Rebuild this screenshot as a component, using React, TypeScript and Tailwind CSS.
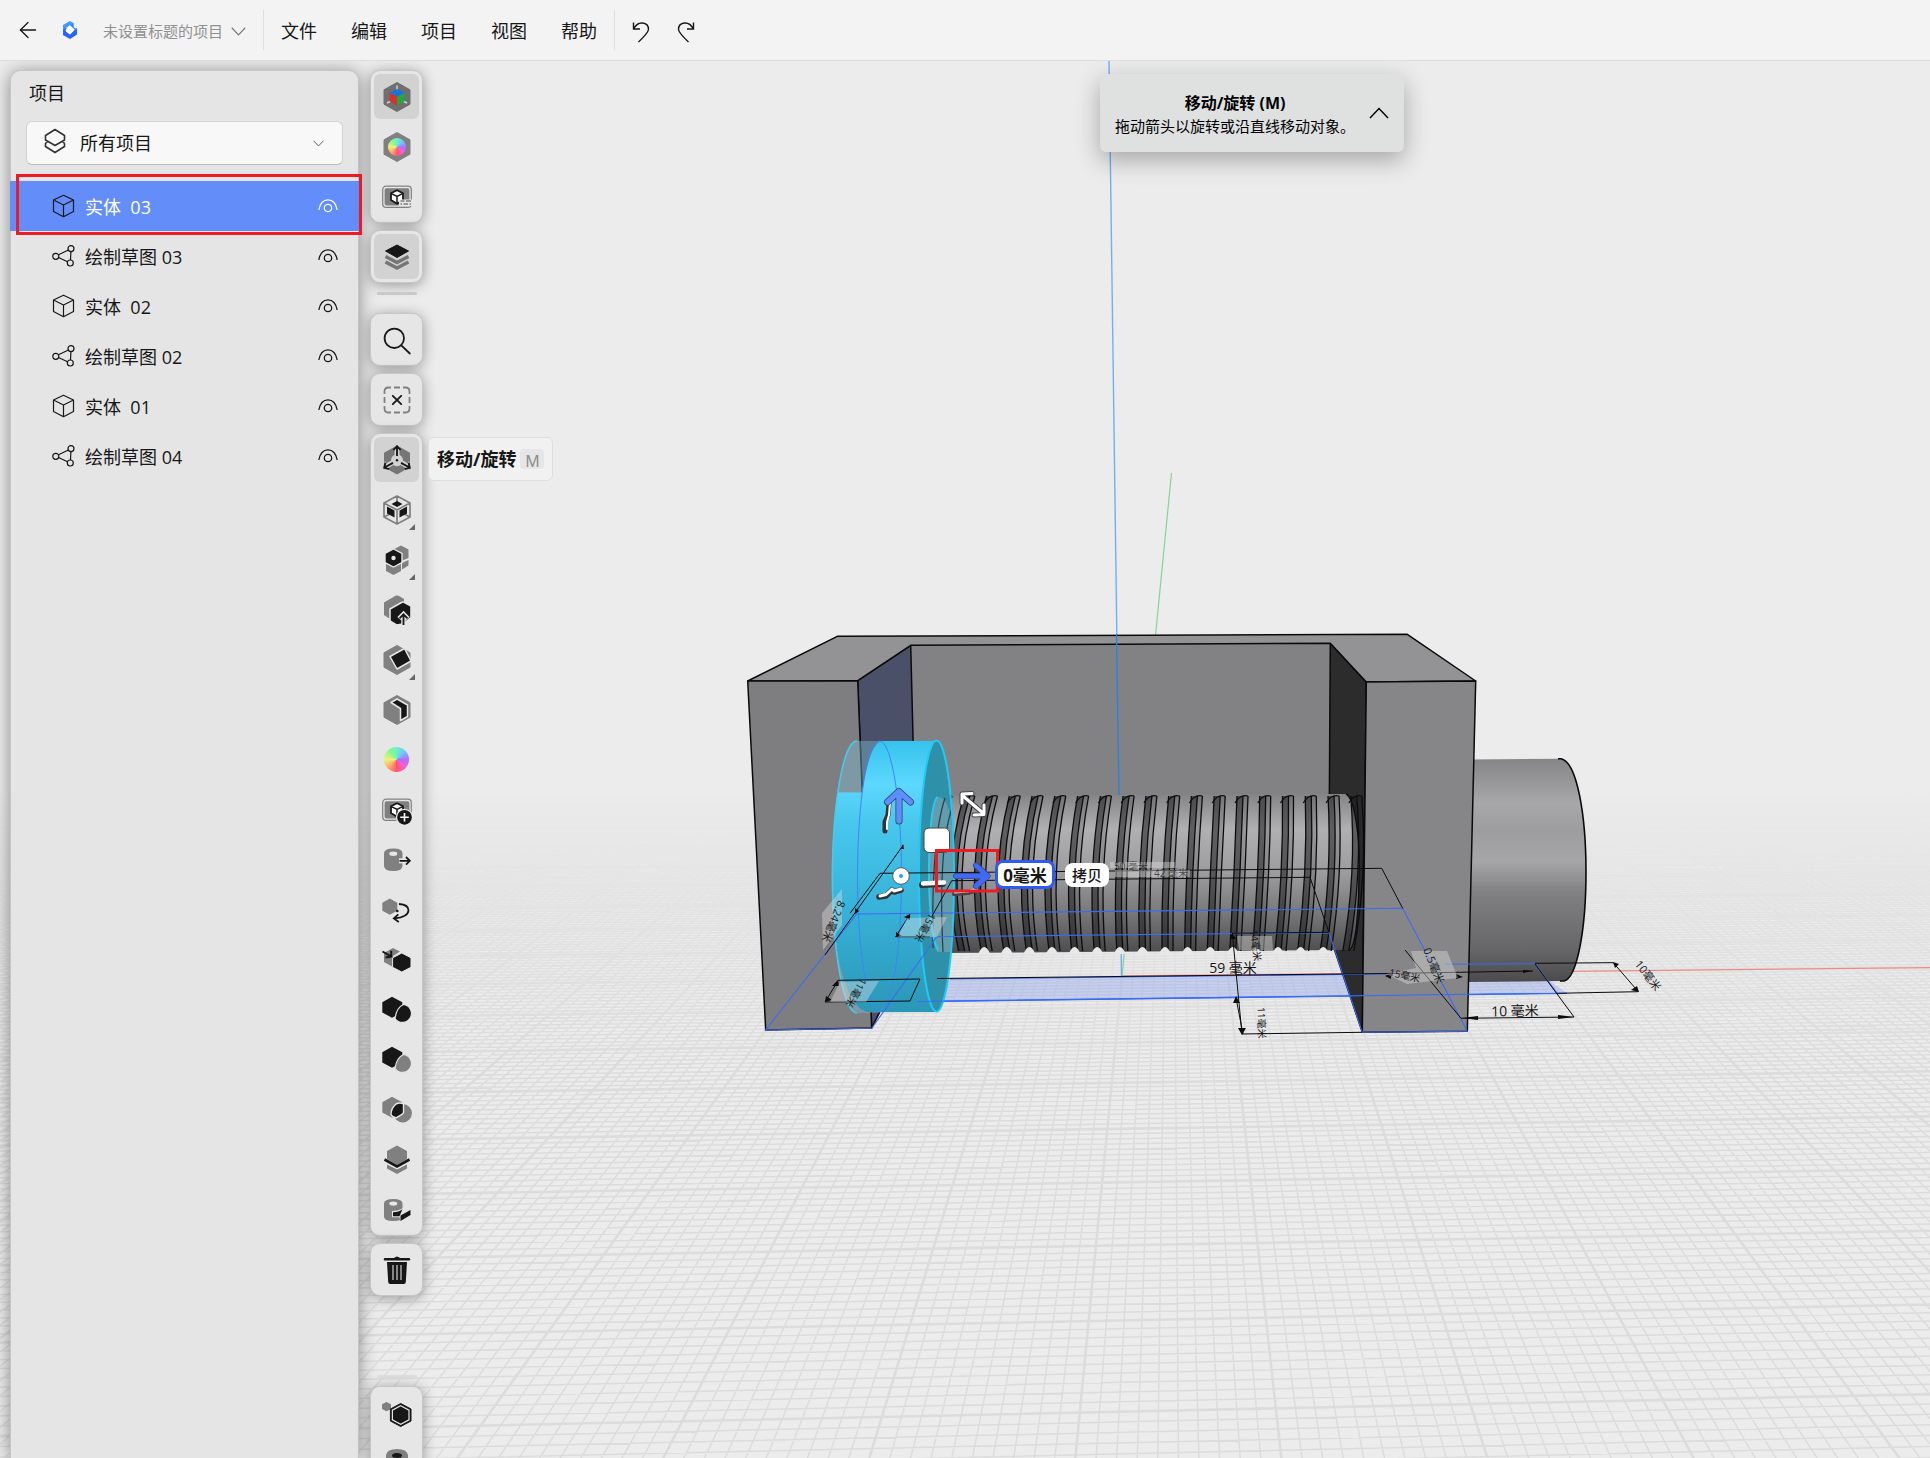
import { useState, type ReactNode } from 'react';
import { ArrowLeft } from 'lucide-react';

const menus = ['文件', '编辑', '项目', '视图', '帮助'];

const items = [
  { id: 1, kind: 'body', name: '实体  03' },
  { id: 2, kind: 'sketch', name: '绘制草图 03' },
  { id: 3, kind: 'body', name: '实体  02' },
  { id: 4, kind: 'sketch', name: '绘制草图 02' },
  { id: 5, kind: 'body', name: '实体  01' },
  { id: 6, kind: 'sketch', name: '绘制草图 04' },
];

const HEX = 'M15 0.5 28 7.8V22.2L15 29.5 2 22.2V7.8Z';
const SMALL_HEX = 'M10 1.7 20.3 7.2V17.5L10 22.8 0.3 17.5V7.2Z';
const DARK = '#171717';
const GRAY = '#808080';
const PANEL = '#e6e6e6';

function Icon({ children }: { children: ReactNode }) {
  return (
    <svg viewBox="0 0 30 30" className="h-[30px] w-[30px]" fill="none" aria-hidden="true">
      {children}
    </svg>
  );
}

function Chevron({ className, up }: { className: string; up?: boolean }) {
  return (
    <svg viewBox="0 0 20 12" className={className} fill="none" stroke="currentColor" strokeWidth="1.5" aria-hidden="true">
      <path d={up ? 'M1 11 10 1.5 19 11' : 'M1 1 10 10.5 19 1'} />
    </svg>
  );
}

function Wheel({ className }: { className: string }) {
  return (
    <span
      className={`block rounded-full bg-[conic-gradient(#66f5c8,#74c4ff_45deg,#b56bff_90deg,#f35fd8_130deg,#ff5573_180deg,#ffab63_225deg,#ecf27a_270deg,#8af78a_320deg,#66f5c8)] ${className}`}
    />
  );
}

function SceneCube() {
  return (
    <>
      <rect x="0.7" y="4.2" width="28.6" height="21.2" rx="3.5" stroke={GRAY} strokeWidth="1.2" />
      <rect x="2.6" y="6.2" width="24.8" height="17.2" rx="1.8" fill={GRAY} />
      <path d="M15 8.2 21 11.3V18L15 21.8 9 18V11.3Z" fill="#fff" stroke={DARK} strokeWidth="1.8" strokeLinejoin="round" />
      <path d="M9 11.3 15 14.5 21 11.3M15 14.5V21.5" stroke={DARK} strokeWidth="1.5" />
    </>
  );
}

const icons: Record<string, ReactNode> = {
  axes: (
    <Icon>
      <path d={HEX} fill="#6f6f6f" stroke="#6f6f6f" strokeLinejoin="round" />
      <path d="M15 3.5V8M5 21 9 19M25 21 21 19" stroke="#d4d4d4" strokeWidth="1.5" />
      <path d="M15 7 22.5 10.8 15 15 7.5 10.8Z" fill="#1a72e0" />
      <path d="M7.5 10.8 15 15V23.5L7.5 19.3Z" fill="#d9302c" />
      <path d="M22.5 10.8 15 15V23.5L22.5 19.3Z" fill="#23a83c" />
    </Icon>
  ),
  material: (
    <span className="relative grid place-items-center">
      <Icon>
        <path d={HEX} fill={GRAY} stroke={GRAY} strokeLinejoin="round" />
      </Icon>
      <Wheel className="absolute h-[18px] w-[18px]" />
    </span>
  ),
  scene: (
    <Icon>
      <SceneCube />
      <path d="M17 17.5H30V24H17Z" fill={PANEL} />
      <path d="M18.5 19H22.5M24 19H29M18.5 22H20M21.5 22H26M27.5 22H29" stroke={GRAY} strokeWidth="1.7" />
    </Icon>
  ),
  layers: (
    <Icon>
      <path d="M3.5 14.5 15 20.5 26.5 14.5M3.5 20 15 26 26.5 20" stroke="#767676" strokeWidth="3.6" strokeLinejoin="round" />
      <path d="M15 1 28.5 8.8 15 17 1.5 8.8Z" fill="#d2d2d2" />
      <path d="M15 3 26.5 9 15 15.5 3.5 9Z" fill={DARK} stroke={DARK} strokeLinejoin="round" />
    </Icon>
  ),
  search: (
    <Icon>
      <circle cx="12.3" cy="13.3" r="9.7" stroke={DARK} strokeWidth="1.8" />
      <path d="M19.3 20.3 27.8 28.5" stroke={DARK} strokeWidth="1.8" strokeLinecap="round" />
    </Icon>
  ),
  deselect: (
    <Icon>
      <path
        d="M2.5 9V6.5Q2.5 2.5 6.5 2.5H9M12 2.5H18M21 2.5H23.5Q27.5 2.5 27.5 6.5V9M27.5 12V18M27.5 21V23.5Q27.5 27.5 23.5 27.5H21M18 27.5H12M9 27.5H6.5Q2.5 27.5 2.5 23.5V21M2.5 18V12"
        stroke={GRAY}
        strokeWidth="1.8"
      />
      <path d="M10.8 10.8 19.2 19.2M19.2 10.8 10.8 19.2" stroke={DARK} strokeWidth="1.8" strokeLinecap="round" />
    </Icon>
  ),
  move: (
    <Icon>
      <path d={HEX} fill="#767676" />
      <circle cx="15" cy="15.3" r="6" fill="#d2d2d2" />
      <path d="M15 0V10M10 18 1 23M20 18 29 23" stroke="#d2d2d2" strokeWidth="5" />
      <path d="M10.5 4.5 15 0 19.5 4.5ZM3 16 0 24 8 26ZM27 16 30 24 22 26Z" fill="#d2d2d2" />
      <path
        d="M15 11V1.5M11.3 5 15 1.2 18.7 5M11 17.8 2.5 22.5M3.4 17.7 2.2 22.9 7.3 24.2M19 17.8 27.5 22.5M26.6 17.7 27.8 22.9 22.7 24.2"
        stroke={DARK}
        strokeWidth="1.9"
      />
      <circle cx="15" cy="15.2" r="1.2" fill={DARK} />
    </Icon>
  ),
  scale: (
    <Icon>
      <path d="M15 1 28 8V22L15 29 2 22V8Z M2 8 15 15 28 8M15 15V29M15 1V8M2 22 8 19M28 22 22 19" stroke={GRAY} strokeWidth="1.7" strokeLinejoin="round" />
      <path d="M15 6 20.5 9 15 12 9.5 9Z M5 11.5 12.5 15.5V22.5L5 18.5Z M25 11.5 17.5 15.5V22.5L25 18.5Z" fill={DARK} />
    </Icon>
  ),
  array: (
    <Icon>
      <path d="M19 0.5 26.5 4.5V13L19 16 11.5 10V4.5Z M26.5 15V20.5L20 24.5V18Z M4 18.5 11.5 22 19 18.5V26L11.5 30 4 26Z" fill={GRAY} />
      <path d="M11.5 4 20 8.4V17.6L11.5 22 3 17.6V8.4Z" fill={DARK} stroke={PANEL} strokeWidth="1.4" />
      <circle cx="11.5" cy="13" r="2.2" fill="#e6e6e6" />
    </Icon>
  ),
  extrude: (
    <Icon>
      <path d="M13.5 0.8 Q15 0 16.5 0.8L22 4V14L8 24 2 20V7.5Z" fill={GRAY} />
      <path d="M19.5 7.5Q21 6.6 22.5 7.5L29 11V22.5L21 29 14.5 30 8 26V14Z" fill={DARK} stroke={PANEL} strokeWidth="1.6" />
      <path d="M21.5 30V19.5M17 23.5 21.5 19 26 23.5" stroke={PANEL} strokeWidth="4.5" />
      <path d="M21.5 30V19.5M17.5 23.3 21.5 19.3 25.5 23.3" stroke={DARK} strokeWidth="1.8" />
    </Icon>
  ),
  draft: (
    <Icon>
      <path d={HEX} fill={GRAY} stroke={GRAY} strokeLinejoin="round" />
      <path d="M8 11.5 22.5 3.5 29 16 15 24Z" fill={DARK} stroke={PANEL} strokeWidth="1.5" strokeLinejoin="round" />
    </Icon>
  ),
  shell: (
    <Icon>
      <path d={HEX} fill={GRAY} stroke={GRAY} strokeLinejoin="round" />
      <path d="M9 7.5 15 4 25.5 10V21.5L18.5 25.5V13.5Z" fill={DARK} stroke={PANEL} strokeWidth="1.5" strokeLinejoin="round" />
    </Icon>
  ),
  color: <Wheel className="h-[25px] w-[25px]" />,
  addScene: (
    <Icon>
      <SceneCube />
      <circle cx="22.5" cy="22.3" r="8" fill={DARK} stroke={PANEL} strokeWidth="1.3" />
      <path d="M22.5 18V26.6M18.2 22.3H26.8" stroke="#fff" strokeWidth="1.6" />
    </Icon>
  ),
  pushFace: (
    <Icon>
      <path d="M2 8.5Q2 3.5 11.3 3.5 20.5 3.5 20.5 8.5V20.5Q20.5 26 11.3 26 2 26 2 20.5Z" fill={GRAY} />
      <ellipse cx="11.3" cy="8.8" rx="4" ry="2.2" fill={PANEL} />
      <path d="M17 15.8H28" stroke={PANEL} strokeWidth="5" />
      <path d="M17.5 15.8H27.5M24 12 27.8 15.8 24 19.6" stroke={DARK} strokeWidth="1.8" />
    </Icon>
  ),
  revolve: (
    <Icon>
      <path d="M7.8 3.5 15.3 7.7V15.8L7.8 19.8 0.3 15.8V7.7Z" fill={GRAY} />
      <path d="M17 9Q26.5 9.5 26.5 15.5 26 22 12.5 23.5M16.3 19.3 11.8 23.5 16.8 27" stroke={DARK} strokeWidth="1.8" />
      <circle cx="15.3" cy="16" r="1.3" fill={DARK} />
    </Icon>
  ),
  project: (
    <Icon>
      <path d="M11 3 18 6.5 11 11V22L2 17V8Z" fill={GRAY} />
      <path d="M19.8 8 29 12.8V22.3L19.8 27 10.6 22.3V12.8Z" fill={DARK} stroke={PANEL} />
      <path d="M0.5 6.5 9 11.3M9.2 5.8V11.6L3.5 12.6" stroke={DARK} strokeWidth="2" />
    </Icon>
  ),
  union: (
    <Icon>
      <path d={SMALL_HEX} fill={DARK} />
      <path d="M21.5 9.5A9 9 0 1 1 13 23.5Q14.5 12.5 21.5 9.5Z" fill={DARK} stroke={PANEL} strokeWidth="1.2" />
    </Icon>
  ),
  subtract: (
    <Icon>
      <path d={SMALL_HEX} fill={DARK} />
      <path d="M21.5 9.5A9 9 0 1 1 13 23.5Q14.5 12.5 21.5 9.5Z" fill={GRAY} stroke={PANEL} strokeWidth="1.2" />
    </Icon>
  ),
  intersect: (
    <Icon>
      <path d={SMALL_HEX} fill={GRAY} />
      <circle cx="20.7" cy="18.2" r="9.2" fill={GRAY} />
      <path d="M14 9Q18 7 21.5 9V17.5Q21 19.5 14 22.8 10 22 9 19.5 9 13.5 14 9Z" fill={DARK} stroke={PANEL} strokeWidth="1.4" />
    </Icon>
  ),
  split: (
    <Icon>
      <path d="M15 0.5 25 6V14L15 20 5 14V6Z M5 19.5 15 24.5 25 19.5V23.5L15 29 5 23.5Z" fill={GRAY} />
      <path d="M2.5 14.5 15 21.5 27.5 14.5" stroke={DARK} strokeWidth="2.6" />
    </Icon>
  ),
  wrap: (
    <Icon>
      <path d="M2 8.5Q2 4 11.3 4 20.5 4 20.5 8.5V21.5Q20.5 26 11.3 26 2 26 2 21.5Z" fill={GRAY} />
      <ellipse cx="11.3" cy="8.6" rx="4" ry="2.2" fill={PANEL} />
      <path d="M10 16Q17 16 21 13V17L29.5 13V20L18.5 27 17.5 22.3H10Z" fill={PANEL} />
      <path d="M11 17.2Q17 17 20.5 14.2L17.5 21.3H11Z M18.5 20.5 28.5 15V20L18.5 26Z" fill={DARK} />
    </Icon>
  ),
  trash: (
    <Icon>
      <path d="M3 4.3H27" stroke={DARK} strokeWidth="2.4" strokeLinecap="round" />
      <path d="M11 4Q15 -1 19 4Z" fill={DARK} />
      <path d="M5 7H25L23.8 27Q23.7 29 21.8 29H8.2Q6.3 29 6.2 27Z" fill={DARK} />
      <path d="M11 10V25M15 10V25M19 10V25" stroke="#cfcfcf" strokeWidth="1.2" />
    </Icon>
  ),
  body: (
    <Icon>
      <path d="M4.5 4 9 6.3V11L4.5 13.3 0 11V6.3Z" fill={GRAY} />
      <path d="M18.7 5.5 29 11V23L18.7 28.5 8.4 23V11Z" fill={DARK} stroke={DARK} strokeLinejoin="round" />
      <path d="M18.7 7.8 27 12.2V21.8L18.7 26.2 10.4 21.8V12.2Z" stroke={PANEL} strokeWidth="1.2" />
    </Icon>
  ),
  face: (
    <Icon>
      <path d="M4 7Q5 1 15 1T26 7V25H4Z" fill={GRAY} />
      <ellipse cx="15" cy="7.5" rx="5" ry="2.5" fill={DARK} />
    </Icon>
  ),
};

type Tool = { icon: string; label: string; active?: boolean; more?: boolean; hint?: boolean };

const viewTools: Tool[] = [
  { icon: 'axes', label: '建模', active: true },
  { icon: 'material', label: '材质' },
  { icon: 'scene', label: '场景' },
];

const modelTools: Tool[] = [
  { icon: 'move', label: '移动/旋转', active: true, hint: true },
  { icon: 'scale', label: '缩放', more: true },
  { icon: 'array', label: '阵列', more: true },
  { icon: 'extrude', label: '拉伸' },
  { icon: 'draft', label: '倒角', more: true },
  { icon: 'shell', label: '抽壳' },
  { icon: 'color', label: '颜色' },
  { icon: 'addScene', label: '添加场景' },
  { icon: 'pushFace', label: '偏移面' },
  { icon: 'revolve', label: '旋转体' },
  { icon: 'project', label: '投影' },
  { icon: 'union', label: '并集' },
  { icon: 'subtract', label: '差集' },
  { icon: 'intersect', label: '交集' },
  { icon: 'split', label: '分割' },
  { icon: 'wrap', label: '包裹' },
];

function ToolGroup({ tools }: { tools: Tool[] }) {
  return (
    <div className="flex flex-col gap-[5px] rounded-[10px] border border-[#c6c6c6] bg-[#e6e6e6] p-[3px] shadow-[0_2px_14px_rgba(0,0,0,0.36)]">
      {tools.map((tool) => (
        <div key={tool.icon} className="relative">
          <button
            type="button"
            aria-label={tool.label}
            className={`grid h-[45px] w-[45px] place-items-center rounded-md ${tool.active ? 'bg-[#d2d2d2]' : 'hover:bg-[#dcdcdc]'}`}
          >
            {icons[tool.icon]}
          </button>
          {tool.more && (
            <svg viewBox="0 0 6 6" className="pointer-events-none absolute right-1 bottom-0.5 h-1.5 w-1.5" aria-hidden="true">
              <path d="M6 0V6H0Z" fill="#666" />
            </svg>
          )}
          {tool.hint && (
            <div
              role="tooltip"
              className="absolute top-0 left-[54px] z-10 flex h-[44px] items-center gap-1 rounded-md border border-[#dedede] bg-[#f1f1f1] px-2 text-[18px] font-bold whitespace-nowrap text-[#171717]"
            >
              {tool.label}
              <kbd className="grid h-5 w-6 place-items-center rounded bg-[#e6e6e6] font-sans text-[16px] font-normal text-[#8d8d8d]">
                M
              </kbd>
            </div>
          )}
        </div>
      ))}
    </div>
  );
}

function Toolbar() {
  return (
    <nav aria-label="工具" className="relative flex w-[53px] shrink-0 flex-col">
      <div className="flex flex-col gap-[7px]">
        <ToolGroup tools={viewTools} />
        <ToolGroup tools={[{ icon: 'layers', label: '图层', active: true }]} />
      </div>
      <div className="mx-auto mt-[9px] mb-[18px] h-[3px] w-10 shrink-0 rounded bg-[#c9c9c9]" />
      <div className="flex flex-col gap-[7px]">
        <ToolGroup tools={[{ icon: 'search', label: '搜索' }]} />
        <ToolGroup tools={[{ icon: 'deselect', label: '取消选择' }]} />
        <ToolGroup tools={modelTools} />
        <ToolGroup tools={[{ icon: 'trash', label: '删除' }]} />
      </div>
      <div className="mx-auto mt-[79px] mb-2 h-[3px] w-10 shrink-0 rounded bg-[#dedede]" />
      <ToolGroup
        tools={[
          { icon: 'body', label: '选择实体' },
          { icon: 'face', label: '选择面' },
        ]}
      />
    </nav>
  );
}

function Header() {
  return (
    <header className="flex h-[61px] shrink-0 items-center border-b border-[#dcdcdc] bg-[#f3f3f3] text-[#171717]">
      <button type="button" aria-label="返回" className="ml-[15px]">
        <ArrowLeft size={26} strokeWidth={1.2} />
      </button>
      <svg viewBox="0 0 16 20" className="ml-[21px] h-5 w-4" aria-hidden="true">
        <path d="M1 5 8 1 11.5 3V7L8 5.2 4.5 7.5 2.5 13 1 12Z" fill="#3f9bff" />
        <path d="M4.5 7.5 1 10V12L4 13.5Z" fill="#1b6dff" />
        <path d="M12 9.5 15 8V14.5L8 19 1 15V12.3L4.5 12 8 14.6Z" fill="#2463ff" />
        <path d="M11.5 3V7L14.8 9.5 12.5 10.5 8 5.2Z" fill="#2d83ff" />
        <path d="M8 5.2 12.8 9.8 8 14.6 3.4 10.4Z" fill="#fff" />
      </svg>
      <button type="button" className="ml-[25px] flex h-10 items-center gap-2 border-r border-[#dedede] pt-0.5 pr-[17px] text-[15px] text-[#909090]">
        未设置标题的项目
        <Chevron className="h-[9px] w-[15px] text-[#777]" />
      </button>
      <div className="flex h-10 items-center gap-[34px] border-r border-[#dedede] px-[17px] pt-0.5 text-[18px]">
        {menus.map((menu) => (
          <button key={menu} type="button">
            {menu}
          </button>
        ))}
      </div>
      <div className="ml-4 flex items-center gap-[25px] pt-1">
        <button type="button" aria-label="撤消">
          <svg viewBox="0 0 20 24" className="h-6 w-5" fill="none" stroke="#171717" strokeWidth="1.4">
            <path d="M2.5 2.5V9H9M2.5 9Q6 2.5 11.5 3 17.5 3.5 17.5 9.5 17 13 7.5 22" />
          </svg>
        </button>
        <button type="button" aria-label="重做">
          <svg viewBox="0 0 20 24" className="h-6 w-5" fill="none" stroke="#171717" strokeWidth="1.4">
            <path d="M17.5 2.5V9H11M17.5 9Q14 2.5 8.5 3 2.5 3.5 2.5 9.5 3 13 12.5 22" />
          </svg>
        </button>
      </div>
    </header>
  );
}

function ItemIcon({ kind }: { kind: string }) {
  return (
    <svg viewBox="0 0 24 24" className="h-6 w-6" fill="none" stroke="currentColor" strokeWidth="1.2" strokeLinejoin="round" aria-hidden="true">
      {kind === 'body' ? (
        <path d="M11.5 1.3 21.5 6V17.5L11.5 22.7 1.5 17.5V6Z M1.5 6 11.5 11 21.5 6M11.5 11V22.7" />
      ) : (
        <>
          <circle cx="3.8" cy="12.3" r="3" />
          <circle cx="19" cy="4.6" r="3" />
          <circle cx="18.3" cy="19" r="3" />
          <path d="M6.5 10.8 16.4 6M6.5 13.5 15.5 17.8M18.9 7.7 18.5 16" />
        </>
      )}
    </svg>
  );
}

function ProjectPanel() {
  const [selected, setSelected] = useState(1);
  return (
    <aside className="relative flex w-[349px] shrink-0 flex-col rounded-t-[10px] border border-b-0 border-[#c6c6c6] bg-[#e5e5e5] text-[18px] text-[#171717] shadow-[0_2px_18px_rgba(0,0,0,0.42)]">
      <h2 className="px-[18px] pt-2 leading-7">项目</h2>
      <div className="relative mx-[15px] mt-3.5">
        <svg viewBox="0 0 24 26" className="pointer-events-none absolute top-[7px] left-[17px] h-[26px] w-6" fill="none" stroke="#333" strokeWidth="1.6" strokeLinejoin="round" aria-hidden="true">
          <path d="M12 1.5 21.5 7.5V12L12 17.5 2.5 12V7.5Z M4.5 13.5 2.5 15.5V18.5L12 24.5 21.5 18.5V15.5L19.5 13.5" />
        </svg>
        <select
          aria-label="筛选项目"
          className="h-11 w-full appearance-none rounded-md border border-[#d2d2d2] border-b-[#bcbcbc] bg-[#f8f8f8] pl-[53px]"
        >
          <option>所有项目</option>
        </select>
        <Chevron className="pointer-events-none absolute top-[19px] right-[19px] h-[7px] w-[11px] text-[#444]" />
      </div>
      <ul className="mt-4 -mr-px -ml-px">
        {items.map((item) => (
          <li
            key={item.id}
            className={`flex h-[50px] items-center pr-[21px] pl-[42px] ${selected === item.id ? 'bg-[#638df9]' : ''}`}
          >
            <button type="button" onClick={() => setSelected(item.id)} className="flex flex-1 items-center gap-[9px] text-left">
              <ItemIcon kind={item.kind} />
              <span className={`pt-0.5 whitespace-pre ${selected === item.id ? 'text-white' : ''}`}>{item.name}</span>
            </button>
            <button type="button" aria-label={`显示或隐藏 ${item.name}`} className={selected === item.id ? 'text-white' : ''}>
              <svg viewBox="0 0 20 16" className="h-4 w-5" fill="none" stroke="currentColor" strokeWidth="1.3">
                <path d="M0.8 12C2 5.5 5.5 1.8 10 1.8S18 5.5 19.2 12" />
                <circle cx="10" cy="10" r="3.7" />
              </svg>
            </button>
          </li>
        ))}
      </ul>
      <div className="pointer-events-none absolute top-[103px] left-[5px] h-[61px] w-[346px] border-[3px] border-[#ed1c24]" />
    </aside>
  );
}

// Ground plane projection: lines along Y meet at (1171.5, 467), lines along X lean on a far point.
function groundLines() {
  let minor = '';
  let major = '';
  for (let k = -160; k <= 120; k++) {
    const slope = -0.097 + k * 0.02079;
    const seg = `M${(1171.5 + slope * 323).toFixed(1)} 790L${(1171.5 + slope * 1003).toFixed(1)} 1470`;
    if (k % 10 === 0) major += seg;
    else minor += seg;
  }
  for (let k = -110; k <= 92; k++) {
    const n = k / 10;
    const y = 977.7 + (510.3 * n) / (17.35 - n);
    const lean = (y - 467) / 43500;
    const seg = `M0 ${(y + lean * 1000).toFixed(1)}L1930 ${(y - lean * 930).toFixed(1)}`;
    if (k % 10 === 0) major += seg;
    else minor += seg;
  }
  return { minor, major };
}

const ground = groundLines();

const threads = Array.from({ length: 19 }, (_, i) => {
  const t = i / 18;
  const bottom = 939 + i * 22.6;
  const top = bottom + 5 + t * 3;
  const bow = -22 + t * 32;
  const mid = (top + bottom) / 2 + bow;
  const down = (dx: number) => `M${(top + dx).toFixed(1)} 796Q${(mid + dx).toFixed(1)} 873 ${(bottom + dx).toFixed(1)} 951`;
  const up = (dx: number) => `L${(bottom + dx).toFixed(1)} 951Q${(mid + dx).toFixed(1)} 873 ${(top + dx).toFixed(1)} 796Z`;
  return {
    groove: down(-3) + up(3),
    flank: down(3) + up(8),
    edges: down(-3) + down(3) + down(8),
    notch: `M${bottom - 6} 954Q${bottom} 940 ${bottom + 6} 954Z`,
    hook: `M${top - 5} 803Q${top} 794 ${top + 8} 796`,
  };
});

const dimensions = [
  { text: '59 毫米', x: 1233, y: 973, turn: 0, size: 14 },
  { text: '10 毫米', x: 1515, y: 1016, turn: -1, size: 14 },
  { text: '11毫米', x: 1258, y: 1023, turn: 88, size: 10 },
  { text: '14毫米', x: 1252, y: 946, turn: 82, size: 10 },
  { text: '10毫米', x: 1645, y: 978, turn: 52, size: 11 },
  { text: '0.5毫米', x: 1430, y: 967, turn: 68, size: 11 },
  { text: '15毫米', x: 1404, y: 979, turn: 12, size: 10 },
  { text: '8.24毫米', x: 830, y: 920, turn: 112, size: 11 },
  { text: '15毫米', x: 922, y: 926, turn: 120, size: 10 },
  { text: '11毫米', x: 853, y: 991, turn: 120, size: 10 },
];

function Scene() {
  return (
    <svg viewBox="0 61 1930 1397" preserveAspectRatio="xMidYMid slice" className="absolute inset-0 h-full w-full" fill="none" role="img" aria-label="模型视图">
      <defs>
        <linearGradient id="fog" x1="0" y1="790" x2="0" y2="1060" gradientUnits="userSpaceOnUse">
          <stop offset="0" stopColor="#fff" stopOpacity="0" />
          <stop offset="0.4" stopColor="#fff" stopOpacity="0.55" />
          <stop offset="1" stopColor="#fff" />
        </linearGradient>
        <mask id="far" maskUnits="userSpaceOnUse" x="0" y="780" width="1930" height="700">
          <rect x="0" y="780" width="1930" height="700" fill="url(#fog)" />
        </mask>
        <linearGradient id="shaft" x1="0" y1="794" x2="0" y2="953" gradientUnits="userSpaceOnUse">
          <stop offset="0" stopColor="#848486" />
          <stop offset="0.22" stopColor="#b0b0b3" />
          <stop offset="0.5" stopColor="#9c9c9f" />
          <stop offset="0.75" stopColor="#78787a" />
          <stop offset="1" stopColor="#4c4c4e" />
        </linearGradient>
        <linearGradient id="knob" x1="0" y1="759" x2="0" y2="982" gradientUnits="userSpaceOnUse">
          <stop offset="0" stopColor="#868688" />
          <stop offset="0.2" stopColor="#a8a8ab" />
          <stop offset="0.32" stopColor="#9d9d9f" />
          <stop offset="0.46" stopColor="#a6a6a8" />
          <stop offset="0.6" stopColor="#808082" />
          <stop offset="0.85" stopColor="#676769" />
          <stop offset="1" stopColor="#4b4b4d" />
        </linearGradient>
        <linearGradient id="disc" x1="0" y1="741" x2="0" y2="1012" gradientUnits="userSpaceOnUse">
          <stop offset="0" stopColor="#36c3ed" />
          <stop offset="0.16" stopColor="#5dd8fe" />
          <stop offset="0.3" stopColor="#48c8ed" />
          <stop offset="0.6" stopColor="#38b3d9" />
          <stop offset="1" stopColor="#2b97b7" />
        </linearGradient>
      </defs>

      <g mask="url(#far)" stroke="#dcdcdc">
        <path d={ground.minor} strokeWidth="1.5" />
        <path d={ground.major} strokeWidth="2.6" />
      </g>

      {/* axes */}
      <path d="M1122 976 1930 967.6" stroke="#f08a8a" strokeWidth="1.3" />
      <path d="M1171.5 473 1122 976" stroke="#85d494" strokeWidth="1.2" />
      <path d="M1109 61 1121.5 976" stroke="#6fb0f5" strokeWidth="1.4" />

      {/* sketch region on the ground */}
      <path d="M917 979 1535 971 1567 993 917 1002Z" fill="#4f74f5" fillOpacity="0.24" />
      <path d="M917 1001.5 1567 993.3" stroke="#3468f5" strokeWidth="1.3" />

      {/* knob on the right */}
      <path d="M1470 759.5 1561 758.7C1577 762 1586 815 1586 872 1586 930 1577 978 1564 981L1466 982Z" fill="url(#knob)" />
      <path d="M1558 758.7 1561 758.7C1577 762 1586 815 1586 872 1586 930 1577 978 1564 981H1560" stroke="#0a0a0a" strokeWidth="1.6" />

      {/* bracket */}
      <g strokeLinejoin="round">
        <path d="M910.7 645.3 1330.3 643.3 1329 932 917 936Z" fill="#828284" />
        <path d="M1330.3 643.3 1366.3 682 1362.3 1032.3 1328.5 932Z" fill="#2c2c2c" stroke="#0a0a0a" strokeWidth="1.5" />
        <path d="M857.7 680.7 910.7 645.3 918 936 871.7 1028Z" fill="#4b5069" stroke="#0a0a0a" strokeWidth="1.5" />
        <path d="M747.7 681 837.3 636.3 1407.3 634.3 1475.7 681 1366.3 682 1330.3 643.3 910.7 645.3 857.7 680.7Z" fill="#939395" stroke="#0a0a0a" strokeWidth="1.5" />
        <path d="M747.7 681 857.7 680.7 871.7 1028 765.7 1030Z" fill="#7e7e80" stroke="#0a0a0a" strokeWidth="1.5" />
        <path d="M1366.3 682 1475.7 681 1467.3 1031.3 1362.3 1032.3Z" fill="#868688" stroke="#0a0a0a" strokeWidth="1.5" />
      </g>
      <path d="M1116.5 635 1119 796" stroke="#2f7fe0" strokeWidth="1.4" />

      {/* threaded shaft */}
      <path d="M936 796 1346 794C1355 798 1360 840 1359 868 1359 910 1356 945 1352 950L940 953C925 930 925 820 936 796Z" fill="url(#shaft)" />
      <g>
        {threads.map((thread, i) => (
          <g key={i}>
            <path d={thread.groove} fill="#1b1b1d" fillOpacity="0.55" />
            <path d={thread.flank} fill="#1b1b1d" fillOpacity="0.16" />
            <path d={thread.edges} stroke="#0c0c0c" strokeWidth="1.3" />
            <path d={thread.hook} stroke="#0c0c0c" strokeWidth="1.2" />
            {i > 1 && i < 18 && <path d={thread.notch} fill="#e8e8e8" />}
          </g>
        ))}
        <path d="M1346 794C1355 798 1360 840 1359 868 1359 910 1356 945 1350 950" stroke="#0c0c0c" strokeWidth="1.4" />
      </g>

      {/* cyan disc */}
      <path d="M857 741A24.5 136 0 0 0 857 1013L937 1012A17.5 136 0 0 0 937 741Z" fill="#7fc3d6" fillOpacity="0.4" />
      <path d="M837.5 792.5H862C866 765 873 743 881 741H937A17.5 136 0 0 1 937 1012H868C845 1010 820 930 837.5 792.5Z" fill="url(#disc)" />
      <ellipse cx="936.5" cy="876" rx="17.5" ry="135.5" fill="#2f90aa" />
      <path d="M937 797C943 797 951 800 953 840 955 890 954 930 950 952H937C928 935 926 820 937 797Z" fill="#74a0ae" fillOpacity="0.75" />
      <path d="M945 798Q931 840 933 948M952 808Q938 850 943 952" stroke="#2b3d44" strokeWidth="1.2" />
      <path d="M938 797C927 800 925 930 938 950" stroke="#2bc8ee" strokeWidth="2" />
      <ellipse cx="936.5" cy="876" rx="17.5" ry="135.5" stroke="#22c9f2" strokeWidth="2" />
      <path d="M857 741A24.5 136 0 0 0 857 1013" stroke="#42cdf0" strokeWidth="1.5" />
      <ellipse cx="879.5" cy="876" rx="22" ry="135" stroke="#3c86f5" strokeWidth="1" />

      {/* sketch outlines */}
      <g stroke="#3a6cf2" strokeWidth="1.1">
        <path d="M856.7 914 1402.7 908.3 1467.3 1031.3 1362.3 1032.3 1329 932.7 936.7 936.7 871.7 1028.3 765.7 1030Z" />
        <path d="M1445 964.3 1535 963.7 1557 993.3 1470 994.3M917 1001.5 1470 994.3" />
        <path d="M950 979 1387 974" />
      </g>

      {/* dimension lines */}
      <g stroke="#0c0c0c" strokeWidth="1">
        <path d="M825 955 903.3 845M850 913.3 880 873.3 1381.7 868.3 1402.7 908.3" />
        <path d="M931.7 916.7 951.7 880.7 1310 877.3 1329 932.7M1232 933.3 1328 932.3" />
        <path d="M1232.3 933.3 1242 1034M1236 998 1243 1034M1241.7 1034 1362 1032.3" />
        <path d="M838.3 980.3 920 979 910 1001 825 1002ZM937 978.5 1387 973.5 1533 971" />
        <path d="M910 914.3 895.7 936.7H930" />
        <path d="M1535 963.3 1613.3 962.7 1638.3 991.7 1557 993.3M1535 964 1574 1017 1461 1018.3 1405 950" />
      </g>
      <path
        d="M1613 962 1619 964 1615 968ZM1639 992 1631 990 1637 986ZM1236 996 1233 1003H1240ZM1242 1035 1238 1028H1246ZM1232 933 1230 939H1236ZM838 980 832 986 839 986ZM825 1002 832 1000 826 996ZM910 914 904 917 910 920ZM896 937 902 936 896 932ZM903 844 901 849H904ZM855 914 855 908 859 911ZM1574 1017 1558 1015V1019ZM1462 1018 1478 1016V1020ZM1533 971 1523 970V973ZM1385 976 1391 973V979ZM1463 977 1456 974V979Z"
        fill="#0c0c0c"
      />

      {/* dimension labels */}
      <path
        d="M822 913 842 889V925L823 950ZM907 918 947 917 937 937 898 937ZM840 982 879 981 866 1002 830 1002ZM1237 936H1272L1273 950H1239ZM1411 951H1447L1458 978 1407 984 1386 974 1416 968ZM1110 862H1175V868H1110ZM1115 870H1190V877H1115Z"
        fill="#e4e4e4"
        fillOpacity="0.4"
      />
      <g fill="#161616" textAnchor="middle">
        {dimensions.map((d) => (
          <text key={`${d.x}-${d.y}`} x={d.x} y={d.y} fontSize={d.size} transform={`rotate(${d.turn} ${d.x} ${d.y})`}>
            {d.text}
          </text>
        ))}
        <text x="1131" y="870" fontSize="10" fillOpacity="0.7">
          50 毫米
        </text>
        <text x="1171" y="877" fontSize="10" fillOpacity="0.7">
          42 毫米
        </text>
      </g>

      {/* move handles */}
      <g strokeLinecap="round" strokeLinejoin="round">
        <path d="M889 803 888 815 885 822V831" stroke="#333" strokeWidth="5" />
        <path d="M890 803 889 815 887 822V829" stroke="#fff" strokeWidth="2" />
        <path d="M879 897 886 896 892 890 894 892 901 890" stroke="#333" strokeWidth="5.5" />
        <path d="M880 896 886 894.5 892 889 894 891 901 889" stroke="#fff" strokeWidth="3" />
        <path d="M922 885 943 884" stroke="#333" strokeWidth="6" />
        <path d="M923 883.5 944 882.5" stroke="#fff" strokeWidth="4.5" />
        <path d="M954 894 968 893 977 890" stroke="#444" strokeWidth="4" />
        <path d="M955 892.5 968 891.5 977 888.5" stroke="#e5e5e5" strokeWidth="2" />
        <path d="M963 796 983 813M962 803 962 794 972 793.5M984 805 984 814.5 974 815" stroke="#444" strokeWidth="5" />
        <path d="M963 796 983 813M962 803 962 794 972 793.5M984 805 984 814.5 974 815" stroke="#fff" strokeWidth="3" />
        <path d="M899 821V794M887.5 802 898.8 791.5 910.5 802" stroke="#333c5c" strokeWidth="7" />
        <path d="M899 821V794M887.5 802 898.8 791.5 910.5 802" stroke="#5c8efc" strokeWidth="5.5" />
        <path d="M956 876H986M976 865.5 987.5 876 976 886" stroke="#333c5c" strokeWidth="6" />
        <path d="M956 876H986M976 865.5 987.5 876 976 886" stroke="#3f69f8" strokeWidth="5" />
      </g>
      <rect x="924" y="828" width="25.5" height="24.5" rx="5" fill="#fff" stroke="#444" />
      <circle cx="901" cy="876" r="8.3" fill="#fff" stroke="#444" strokeWidth="0.8" />
      <circle cx="901" cy="876" r="2" fill="#22a5e8" />
      <rect x="936.5" y="850.5" width="61" height="40.5" stroke="#ed1c24" strokeWidth="3" />
    </svg>
  );
}

function HelpCard() {
  const [open, setOpen] = useState(true);
  return (
    <section className="absolute top-[13px] left-[57%] flex items-center gap-[14px] rounded-md bg-[#dfe0e0] pt-[18px] pr-[15px] pb-3.5 pl-[15px] text-[15px] leading-[23px] text-black shadow-[0_8px_24px_rgba(0,0,0,0.3)]">
      <div className="text-center">
        <h3 className="text-[16px] font-bold">移动/旋转 (M)</h3>
        {open && <p>拖动箭头以旋转或沿直线移动对象。</p>}
      </div>
      <button type="button" aria-label="收起" onClick={() => setOpen(!open)} className="pb-1">
        <Chevron up className="h-3 w-5" />
      </button>
    </section>
  );
}

export default function App() {
  const [distance, setDistance] = useState('0毫米');
  return (
    <div className="flex h-screen flex-col overflow-hidden bg-[#ececec] font-['Open_Sans','Noto_Sans_CJK_SC',sans-serif]">
      <Header />
      <main className="relative flex min-h-0 flex-1 gap-[11px] overflow-hidden pt-[9px] pl-2.5">
        <Scene />
        <ProjectPanel />
        <Toolbar />
        <HelpCard />
        <div className="absolute top-[799px] left-[995px] flex items-center gap-2.5">
          <input
            aria-label="移动距离"
            value={distance}
            onChange={(e) => setDistance(e.target.value)}
            className="h-[29px] w-[60px] rounded-lg border-[3px] border-[#2f5bf2] bg-white text-center text-[17px] font-bold text-[#171717]"
          />
          <button type="button" className="h-6 w-[44px] rounded-lg bg-white text-[15px] leading-6 font-medium text-[#171717]">
            拷贝
          </button>
        </div>
      </main>
    </div>
  );
}
